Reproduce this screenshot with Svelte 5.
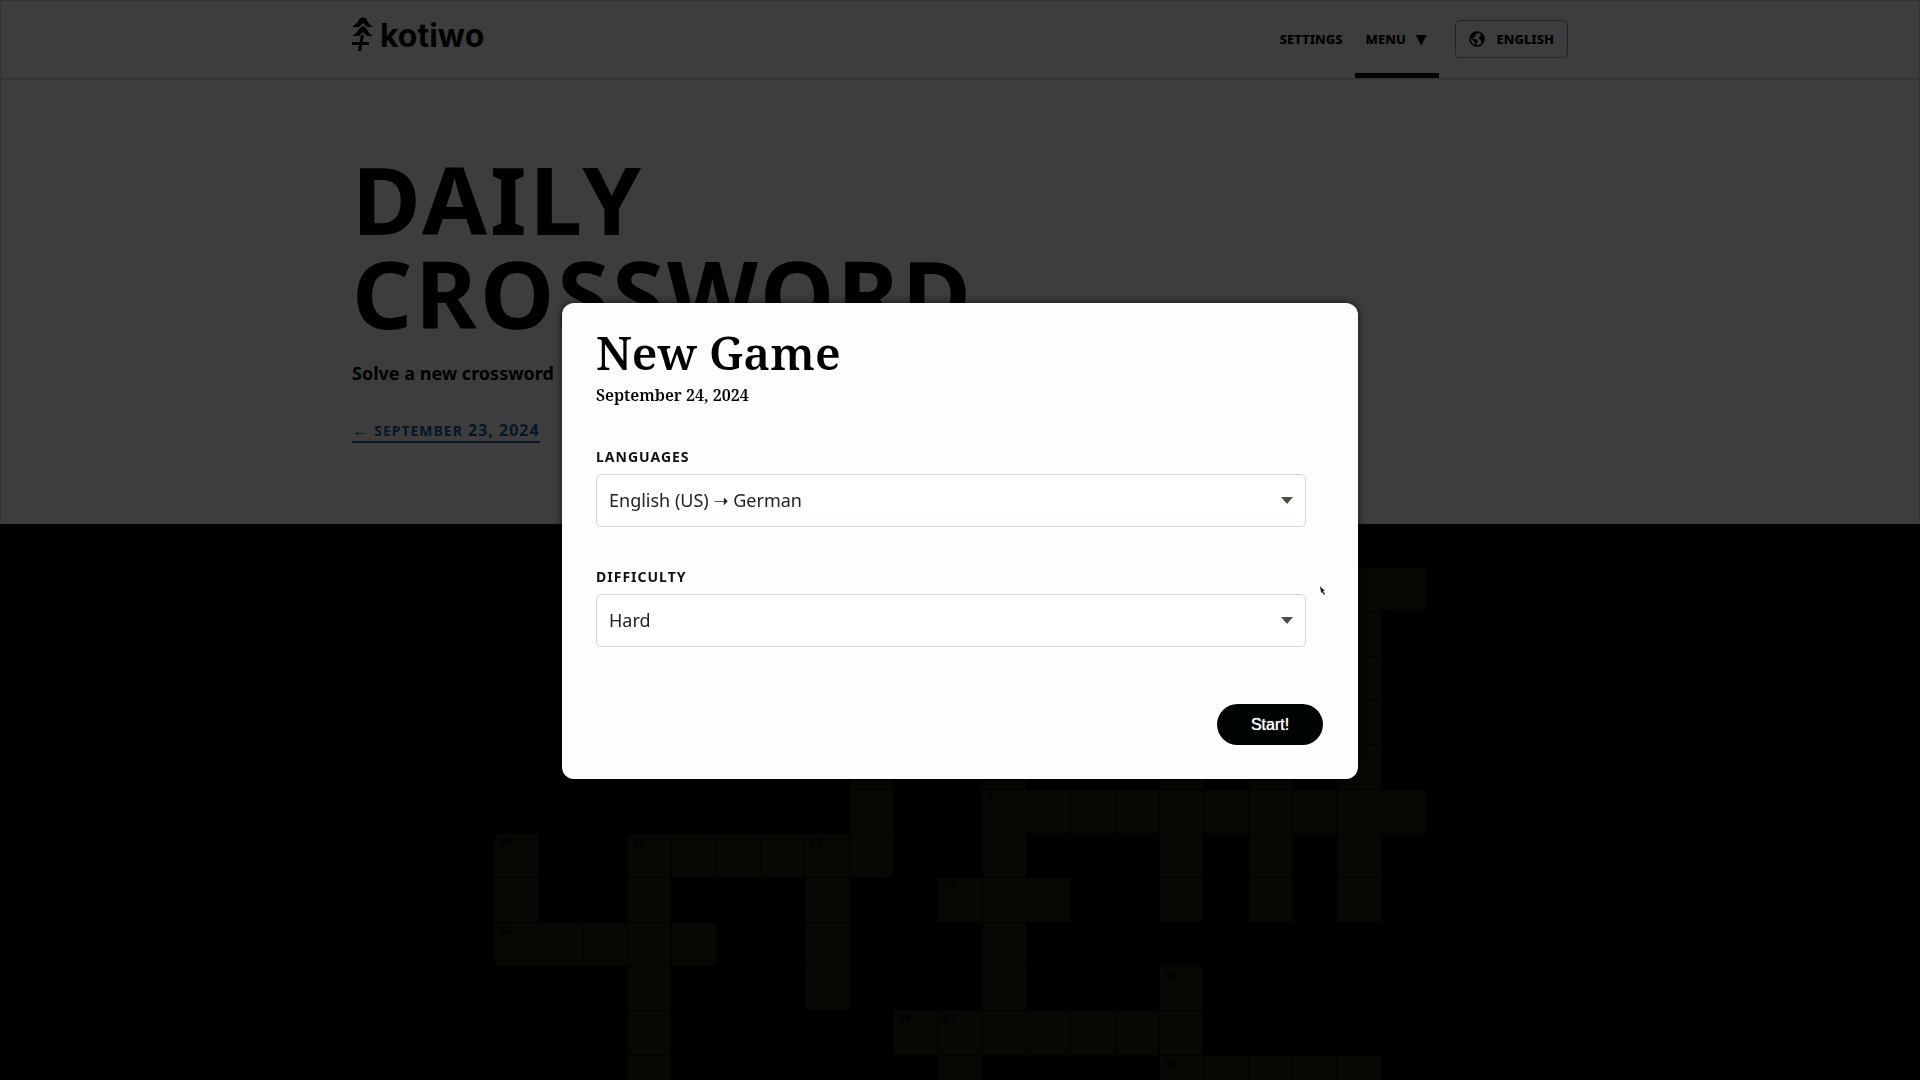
<script>
  const columns = 21;
  const languages = ['English (US) ➝ German', 'German ➝ English (US)'];
  const levels = ['Hard', 'Medium', 'Easy'];
  let language = $state(languages[0]);
  let level = $state('Hard');

  // Filled squares for each row of the crossword.
  const rows = [
    [19, 20],
    [19],
    [19],
    [19],
    [8, 11, 15, 17, 19],
    [8, 11, 12, 13, 14, 15, 16, 17, 18, 19, 20],
    [0, 3, 4, 5, 6, 7, 8, 11, 15, 17, 19],
    [0, 3, 7, 10, 11, 12, 15, 17, 19],
    [0, 1, 2, 3, 4, 7, 11],
    [3, 7, 11, 15],
    [3, 9, 10, 11, 12, 13, 14, 15],
    [3, 10, 15, 16, 17, 18, 19]
  ];
  const clues = {
    '5-11': 9, '6-0': 10, '6-3': 11, '6-7': 12, '7-10': 13,
    '8-0': 14, '9-15': 15, '10-9': 16, '10-10': 17, '11-15': 18
  };
  const cells = rows.flatMap((filled, r) =>
    Array.from({ length: columns }, (_, c) => ({
      filled: filled.includes(c),
      clue: clues[`${r}-${c}`]
    }))
  );
</script>

<div class="page">
  <header>
    <div class="container bar">
      <a class="logo" href="#home">
        <svg viewBox="0 0 22 36" width="22" height="36" fill="currentColor">
          <path d="M0 10 Q5 7 8 1 Q11 0 14 1 Q16 7 21 10 H15 L11 6 L7 10 Z" />
          <path d="M0 19 Q5 16 8 11 L11 9 L14 11 Q16 16 21 19 H15 L11 15 L7 19 Z" />
          <path d="M0 25 H17 V28 H0 Z M9 18 H12 L9 34 H6 Z" />
        </svg>
        <span>kotiwo</span>
      </a>
      <nav>
        <a class="item" href="#settings">Settings</a>
        <a class="item active" href="#menu">Menu <span class="tri">▼</span></a>
        <button class="lang" type="button">
          <svg viewBox="0 0 16 16" width="16" height="16">
            <circle cx="8" cy="8" r="7" fill="none" stroke="currentColor" stroke-width="1.6" />
            <path fill="currentColor" d="M1 7 L2 4 L6 1 L9 1 L8 3 L6 4 L6 6 L4 7 L4 8 L7 8 L9 10 L8 12 L7 15 L6 14 L6 12 L4 10 L4 9 Z M11 2 L14 5 L15 9 L13 12 L12 11 L12 9 L10 8 L10 6 L12 5 Z" />
          </svg>
          English
        </button>
      </nav>
    </div>
  </header>

  <section class="hero">
    <div class="container">
      <h1>Daily<br />Crossword</h1>
      <p>Solve a new crossword</p>
      <a class="prev" href="#previous">← <span>September</span> 23, 2024</a>
    </div>
  </section>

  <main>
    <div class="board">
      {#each cells as cell}
        <div class="cell" class:filled={cell.filled}>{cell.clue ?? ''}</div>
      {/each}
    </div>
  </main>
</div>

<div class="overlay">
  <div class="dialog" role="dialog" aria-modal="true" aria-labelledby="dialog-title">
    <h2 id="dialog-title">New Game</h2>
    <p class="date">September 24, 2024</p>
    <form onsubmit={(e) => e.preventDefault()}>
      <div class="field">
        <label for="languages">Languages</label>
        <div class="select">
          <select id="languages" bind:value={language}>
            {#each languages as option}<option>{option}</option>{/each}
          </select>
          <svg class="caret" viewBox="0 0 12 7" width="12" height="7"><path d="M0 0H12L6 7Z" fill="#4b5044" /></svg>
        </div>
      </div>
      <div class="field">
        <label for="difficulty">Difficulty</label>
        <div class="select">
          <select id="difficulty" bind:value={level}>
            {#each levels as option}<option>{option}</option>{/each}
          </select>
          <svg class="caret" viewBox="0 0 12 7" width="12" height="7"><path d="M0 0H12L6 7Z" fill="#4e4e4b" /></svg>
        </div>
      </div>
      <button class="start" type="submit">Start!</button>
    </form>
    <svg class="pointer" viewBox="0 0 6 9" width="6" height="9"><path d="M0 0 L5 5 L3 5 L5 8 L4 9 L2 6 L1 7 Z" fill="#222" /></svg>
  </div>
</div>

<style>
  :global(body) {
    background: #000;
    overflow: hidden;
  }
  .page {
    height: 100vh;
    overflow: hidden;
    background: #3d3d3d;
    color: #000;
    font-family: 'Noto Sans', sans-serif;
    display: flex;
    flex-direction: column;
  }
  .container {
    box-sizing: border-box;
    width: 100%;
    max-width: 1216px;
    margin: 0 auto;
  }
  header {
    box-sizing: border-box;
    height: 80px;
    border: 1px solid #343434;
    border-bottom-width: 2px;
    flex: none;
  }
  .bar {
    height: 100%;
    display: flex;
    justify-content: space-between;
  }
  .logo {
    display: flex;
    align-items: flex-start;
    gap: 6px;
    padding-top: 16px;
    color: #000;
    text-decoration: none;
    font: 700 32px/38px Inter, sans-serif;
  }
  nav {
    display: flex;
    align-items: stretch;
    font-size: 13px;
    font-weight: 800;
    text-transform: uppercase;
  }
  .item {
    box-sizing: border-box;
    display: flex;
    align-items: center;
    gap: 10px;
    padding: 4px 12px 0 11px;
    color: #000;
    text-decoration: none;
    border-bottom: 5px solid transparent;
  }
  .active {
    border-color: #000;
    margin-right: 16px;
  }
  .tri {
    font-family: 'DejaVu Sans', sans-serif;
    font-size: 14px;
  }
  .lang {
    align-self: flex-start;
    margin-top: 19px;
    height: 38px;
    display: flex;
    align-items: center;
    gap: 12px;
    padding: 0 13px;
    border: 1px solid #252525;
    border-radius: 5px;
    background: none;
    color: #000;
    font: inherit;
    text-transform: uppercase;
  }
  .hero {
    box-sizing: border-box;
    height: 444px;
    padding-top: 72px;
    border-left: 1px solid #343434;
    border-right: 1px solid #343434;
    flex: none;
  }
  h1 {
    margin: 0;
    font-size: 94px;
    line-height: 94px;
    font-weight: 700;
    letter-spacing: 3px;
    text-transform: uppercase;
  }
  .hero p {
    margin: 21px 0 34px;
    font-size: 18px;
    line-height: 24px;
    font-weight: 700;
  }
  .prev {
    display: inline-block;
    color: #081626;
    font-size: 16px;
    line-height: 20px;
    font-weight: 700;
    letter-spacing: 1px;
    text-decoration: none;
    border-bottom: 2px solid #081626;
  }
  .prev span {
    font-size: 14px;
    text-transform: uppercase;
  }
  main {
    flex: 1;
    background: #000;
    padding-top: 44px;
  }
  .board {
    width: 930px;
    margin: 0 auto;
    display: grid;
    grid-template-columns: repeat(21, 1fr);
    gap: 1px;
  }
  .cell {
    box-sizing: border-box;
    aspect-ratio: 1;
    overflow: hidden;
    padding: 2px 4px;
    font: 700 11px/13px 'Liberation Mono', monospace;
  }
  .filled {
    background: #070704;
  }
  .overlay {
    position: fixed;
    inset: 0;
    display: flex;
    align-items: center;
    justify-content: center;
  }
  .dialog {
    position: relative;
    box-sizing: border-box;
    width: 796px;
    max-width: 100%;
    margin-top: 2px;
    padding: 23px 35px 34px 34px;
    border-radius: 12px;
    background: #fefefe;
    color: #000;
    box-shadow: 0 0 8px rgba(0, 0, 0, 0.7);
    font-family: 'Noto Sans', sans-serif;
  }
  h2 {
    margin: 0;
    font: 600 46px/52px 'Noto Serif', 'Liberation Serif', serif;
  }
  .date {
    margin: 5px 0 39px;
    font: 600 16px/24px 'Noto Serif', 'Liberation Serif', serif;
  }
  form {
    display: flex;
    flex-direction: column;
  }
  .field {
    margin: 0 17px 39px 0;
  }
  label {
    display: block;
    margin-bottom: 6px;
    font-size: 14px;
    line-height: 22px;
    font-weight: 700;
    letter-spacing: 1px;
    text-transform: uppercase;
    color: #111;
  }
  .select {
    display: grid;
    align-items: center;
  }
  select {
    grid-area: 1 / 1;
    appearance: none;
    box-sizing: border-box;
    width: 100%;
    height: 53px;
    padding: 0 12px 2px;
    border: 1px solid #cfd8dc;
    border-radius: 5px;
    background: #fff;
    color: #222;
    font: 400 18px 'Noto Sans', 'DejaVu Sans', sans-serif;
  }
  .caret {
    grid-area: 1 / 1;
    justify-self: end;
    margin-right: 13px;
    pointer-events: none;
  }
  .start {
    align-self: flex-end;
    margin-top: 18px;
    width: 106px;
    height: 41px;
    border: 0;
    border-radius: 21px;
    background: #000400;
    color: #fff;
    font: 400 16px 'Liberation Sans', sans-serif;
    text-shadow: 0 0 1px #fff;
  }
  .pointer {
    position: absolute;
    right: 32px;
    top: 283px;
  }
</style>
